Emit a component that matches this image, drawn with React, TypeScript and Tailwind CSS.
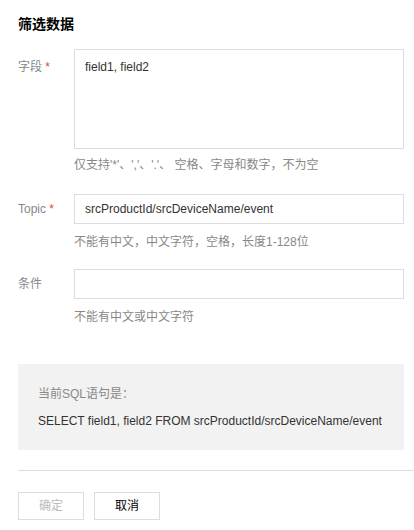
export default function App() {
  const font = { fontFamily: '"Liberation Sans", Arial, "Noto Sans CJK SC", sans-serif' };
  return (
    <div className="w-[414px] h-[530px] bg-white overflow-hidden text-[12px] text-[#333]" style={font}>
      <div className="pl-[18px] pt-[14px]">
        {/* Header */}
        <h2 className="text-[14px] font-bold leading-[20px] text-[#000]">筛选数据</h2>

        <div className="mt-[15px] flex flex-col">
          {/* 字段 */}
          <div className="flex">
            <label className="w-[56px] pt-[9px] leading-[18px] text-[#888]">
              字段 <span className="text-[#e54545]">*</span>
            </label>
            <div className="flex flex-col">
              <textarea
                defaultValue="field1, field2"
                className="w-[330px] h-[100px] border border-[#ddd] px-[10px] py-[8px] leading-[18px] text-[#333] resize-none outline-none"
              />
              <p className="mt-[7px] leading-[18px] text-[#888]">仅支持'*'、','、'.'、 空格、字母和数字，不为空</p>
            </div>
          </div>

          {/* Topic */}
          <div className="flex mt-[20px]">
            <label className="w-[56px] pt-[6px] leading-[18px] text-[#888]">
              Topic <span className="text-[#e54545]">*</span>
            </label>
            <div className="flex flex-col">
              <input
                defaultValue="srcProductId/srcDeviceName/event"
                className="w-[330px] h-[30px] border border-[#ddd] px-[10px] text-[#333] outline-none"
              />
              <p className="mt-[9px] leading-[18px] text-[#888]">不能有中文，中文字符，空格，长度1-128位</p>
            </div>
          </div>

          {/* 条件 */}
          <div className="flex mt-[18px]">
            <label className="w-[56px] pt-[6px] leading-[18px] text-[#888]">条件</label>
            <div className="flex flex-col">
              <input className="w-[330px] h-[30px] border border-[#ddd] px-[10px] text-[#333] outline-none" />
              <p className="mt-[9px] leading-[18px] text-[#888]">不能有中文或中文字符</p>
            </div>
          </div>
        </div>

        {/* SQL preview */}
        <div className="mt-[38px] w-[386px] h-[86px] bg-[#f2f2f2] px-[20px] pt-[21px]">
          <p className="leading-[18px] text-[#888]">当前SQL语句是：</p>
          <p className="mt-[9px] leading-[18px] text-[#333]">SELECT field1, field2 FROM srcProductId/srcDeviceName/event</p>
        </div>

        <div className="mt-[20px] h-px bg-[#ddd]" />

        <div className="mt-[21px] flex gap-[10px]">
          <button className="w-[66px] h-[28px] border border-[#ddd] text-[#bbb] bg-white">确定</button>
          <button className="w-[66px] h-[28px] border border-[#ddd] text-[#000] bg-white">取消</button>
        </div>
      </div>
    </div>
  );
}
